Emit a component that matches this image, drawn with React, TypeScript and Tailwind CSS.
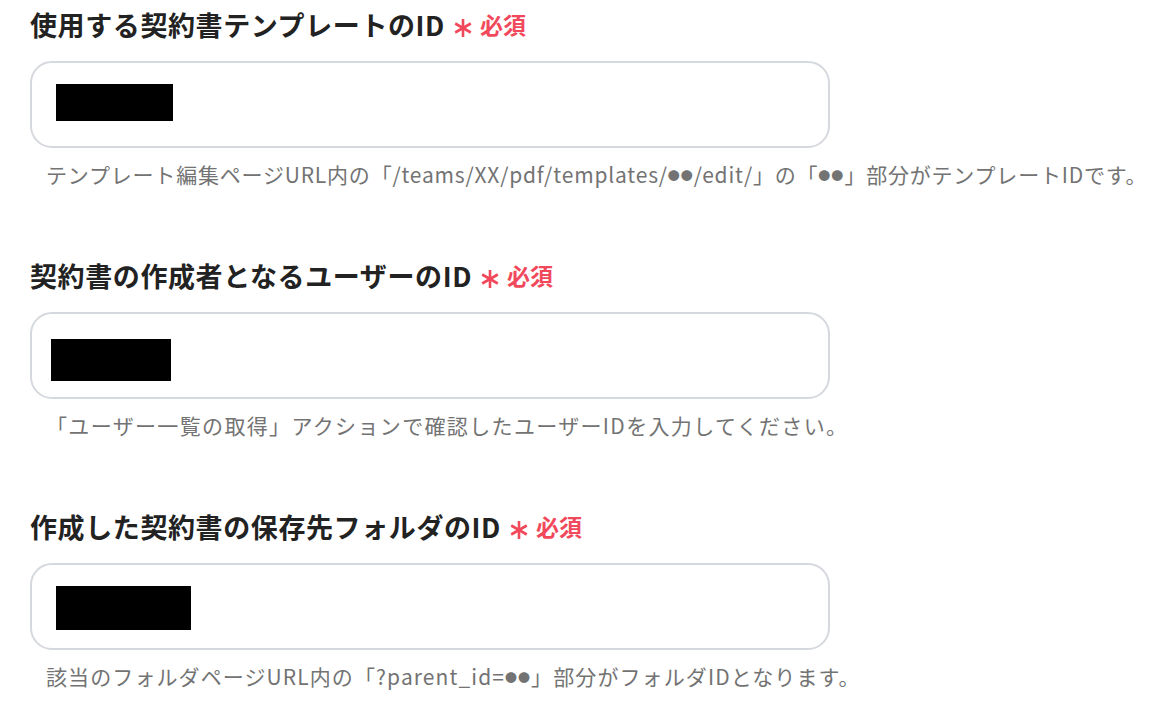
const fields = [
  {
    label: '使用する契約書テンプレートのID',
    mask: 'ml-[24px] mt-[21px] w-[117px] h-[37px]',
    track: 'tracking-[0.8px]',
    help: ['テンプレート編集ページURL内の「/teams/XX/pdf/templates/', '●●', '/edit/」の「', '●●', '」部分がテンプレートIDです。'],
  },
  {
    label: '契約書の作成者となるユーザーのID',
    mask: 'ml-[19px] mt-[25px] w-[120px] h-[42px]',
    track: 'tracking-[1.35px]',
    help: ['「ユーザー一覧の取得」アクションで確認したユーザーIDを入力してください。'],
  },
  {
    label: '作成した契約書の保存先フォルダのID',
    mask: 'ml-[24px] mt-[21px] w-[135px] h-[44px]',
    track: 'tracking-[1.1px]',
    help: ['該当のフォルダページURL内の「?parent_id=', '●●', '」部分がフォルダIDとなります。'],
  },
];

function Asterisk() {
  return (
    <svg width="20" height="20" viewBox="0 0 20 20" className="ml-[8px] mt-[8px]">
      <g stroke="#f2485b" strokeWidth="2.6" strokeLinecap="butt">
        <line x1="10" y1="1" x2="10" y2="19" />
        <line x1="2.2" y1="5.5" x2="17.8" y2="14.5" />
        <line x1="2.2" y1="14.5" x2="17.8" y2="5.5" />
      </g>
    </svg>
  );
}

function Field({ label, mask, track, help }: { label: string; mask: string; track: string; help: string[] }) {
  return (
    <div className="flex flex-col">
      <div className="flex items-center h-[48px]">
        <span className="text-[27px] font-bold text-[#222222] leading-none tracking-[0.6px]">{label}</span>
        <Asterisk />
        <span className="ml-[7px] text-[23px] font-bold text-[#f2485b] leading-none">必須</span>
      </div>
      <div className="mt-[13px] w-[800px] h-[87px] rounded-[22px] border-2 border-[#d5d8dd] bg-white flex items-start">
        <div className={`bg-black ${mask}`} />
      </div>
      <p className={`mt-[12px] h-[28px] pl-[16px] text-[21px] text-[#737373] leading-[28px] whitespace-nowrap ${track}`}>
        {help.map((t, i) =>
          t === '●●' ? (
            <span key={i} className="text-[12px] leading-none tracking-[1px] align-[2px]">
              {t}
            </span>
          ) : (
            <span key={i}>{t}</span>
          )
        )}
      </p>
    </div>
  );
}

export default function App() {
  return (
    <div
      className="w-[1166px] h-[712px] bg-white px-[30px] flex flex-col gap-[63px] overflow-hidden"
      style={{ fontFamily: '"Noto Sans CJK JP", "Noto Sans", sans-serif' }}
    >
      {fields.map((f) => (
        <Field key={f.label} {...f} />
      ))}
    </div>
  );
}
